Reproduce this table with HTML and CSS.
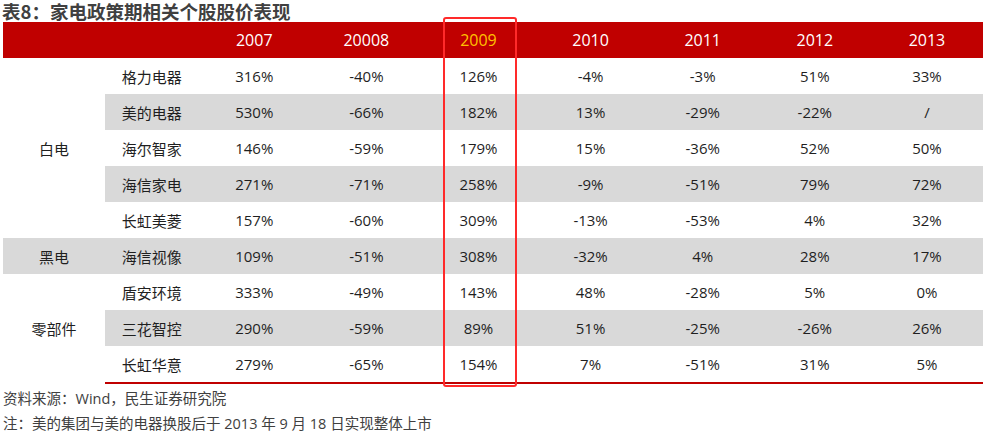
FILE: index.html
```html
<!DOCTYPE html>
<html lang="zh">
<head>
<meta charset="utf-8">
<link rel="stylesheet" href="styles.css">
</head>
<body>
<div class="page">
  <h1 class="title">表8：家电政策期相关个股股价表现</h1>
  <table class="data">
    <colgroup>
      <col class="c-cat"><col class="c-name">
      <col class="c-val"><col class="c-val"><col class="c-val"><col class="c-val"><col class="c-val"><col class="c-val"><col class="c-val">
    </colgroup>
    <thead>
      <tr><th></th><th></th><th>2007</th><th>20008</th><th class="hl">2009</th><th>2010</th><th>2011</th><th>2012</th><th>2013</th></tr>
    </thead>
    <tbody>
      <tr><td rowspan="5">白电</td><td>格力电器</td><td>316%</td><td>-40%</td><td>126%</td><td>-4%</td><td>-3%</td><td>51%</td><td>33%</td></tr>
      <tr class="g"><td>美的电器</td><td>530%</td><td>-66%</td><td>182%</td><td>13%</td><td>-29%</td><td>-22%</td><td>/</td></tr>
      <tr><td>海尔智家</td><td>146%</td><td>-59%</td><td>179%</td><td>15%</td><td>-36%</td><td>52%</td><td>50%</td></tr>
      <tr class="g"><td>海信家电</td><td>271%</td><td>-71%</td><td>258%</td><td>-9%</td><td>-51%</td><td>79%</td><td>72%</td></tr>
      <tr><td>长虹美菱</td><td>157%</td><td>-60%</td><td>309%</td><td>-13%</td><td>-53%</td><td>4%</td><td>32%</td></tr>
      <tr class="g"><td>黑电</td><td>海信视像</td><td>109%</td><td>-51%</td><td>308%</td><td>-32%</td><td>4%</td><td>28%</td><td>17%</td></tr>
      <tr><td rowspan="3">零部件</td><td>盾安环境</td><td>333%</td><td>-49%</td><td>143%</td><td>48%</td><td>-28%</td><td>5%</td><td>0%</td></tr>
      <tr class="g"><td>三花智控</td><td>290%</td><td>-59%</td><td>89%</td><td>51%</td><td>-25%</td><td>-26%</td><td>26%</td></tr>
      <tr class="last"><td>长虹华意</td><td>279%</td><td>-65%</td><td>154%</td><td>7%</td><td>-51%</td><td>31%</td><td>5%</td></tr>
    </tbody>
  </table>
  <div class="notes">
    <p>资料来源：Wind，民生证券研究院</p>
    <p>注：美的集团与美的电器换股后于 2013 年 9 月 18 日实现整体上市</p>
  </div>
  <div class="highlight-box"></div>
</div>
</body>
</html>
```

FILE: styles.css
```css
html, body {
  margin: 0;
  padding: 0;
  background: #ffffff;
}
.page {
  position: relative;
  width: 1000px;
  height: 438px;
  font-family: "Open Sans", "Noto Sans CJK SC", sans-serif;
  color: #262626;
}
.title {
  margin: 0;
  padding: 0 0 0 2px;
  height: 22px;
  line-height: 23px;
  font-size: 18.5px;
  font-weight: bold;
  color: #404040;
  font-family: "Noto Sans CJK SC", sans-serif;
  white-space: nowrap;
}
.data {
  margin-left: 3px;
  width: 980px;
  border-collapse: collapse;
  table-layout: fixed;
  font-size: 15px;
}
.c-cat { width: 102px; }
.c-name { width: 93px; }
.c-val { width: 112px; }
.data th {
  background: #c00000;
  color: #ffffff;
  font-weight: normal;
  font-size: 16px;
  height: 36px;
  padding: 0;
  text-align: center;
}
.data th.hl { color: #ffc000; }
.data td {
  height: 36px;
  padding: 0;
  text-align: center;
  color: #1f1f1f;
}
.data tr.g td { background: #d9d9d9; }
.data tr.last td { border-bottom: 2px solid #c00000; }
.notes {
  padding: 2px 0 0 3px;
  font-size: 14.5px;
  color: #404040;
}
.notes p {
  margin: 0;
  height: 25px;
  line-height: 25px;
  white-space: nowrap;
}
.highlight-box {
  position: absolute;
  left: 443px;
  top: 17px;
  width: 70px;
  height: 366px;
  border: 2px solid #ff2a2a;
  border-radius: 3px;
}
```
